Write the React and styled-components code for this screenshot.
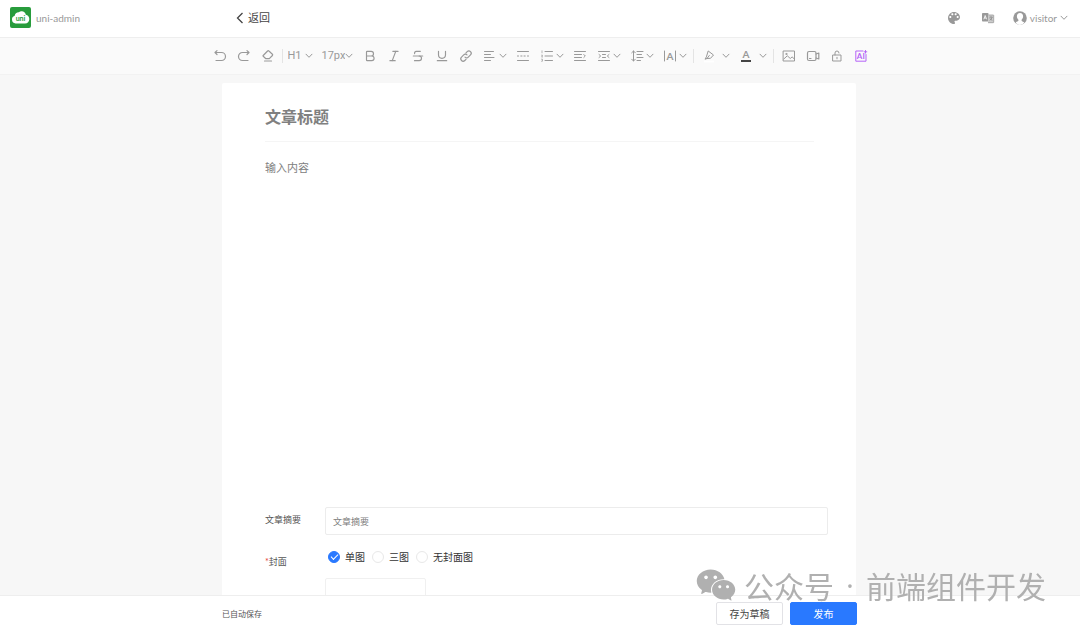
import React, { useState } from 'react'
import styled, { createGlobalStyle } from 'styled-components'
import { Bold, Italic, Strikethrough, Underline } from 'lucide-react'
import { IoMdColorPalette } from 'react-icons/io'
import { AiFillWechat } from 'react-icons/ai'

const GlobalStyle = createGlobalStyle`
    * {
        box-sizing: border-box;
    }

    body {
        margin: 0;
        background: #f7f7f7;
        color: #555;
        font-family: Lato, 'Noto Sans CJK SC', sans-serif;
        font-size: 10px;
    }

    button,
    input,
    select,
    textarea {
        margin: 0;
        padding: 0;
        border: 0;
        outline: 0;
        background: none;
        color: inherit;
        font: inherit;
    }

    svg {
        display: block;
        flex: none;
        overflow: visible;
    }
`

const Page = styled.div`
    display: flex;
    flex-direction: column;
    height: 100vh;
`

const Header = styled.header`
    display: flex;
    align-items: center;
    height: 38px;
    padding: 0 12px 2px 10px;
    border-bottom: 1px solid #eee;
    background: #fff;
`

const Brand = styled.a`
    display: flex;
    align-items: center;
    gap: 5px;
    width: 226px;
    color: #999;
    text-decoration: none;
`

const BackButton = styled.button`
    display: flex;
    align-items: center;
    gap: 4px;
    color: #444;
    font-size: 11px;
    line-height: 16px;
`

const HeaderTools = styled.div`
    display: flex;
    align-items: center;
    margin-left: auto;
    color: #999;
`

const HeaderButton = styled.button`
    display: flex;
    align-items: center;
    justify-content: center;
    width: 34px;
    height: 24px;
`

const UserButton = styled.button`
    display: flex;
    align-items: center;
    gap: 3px;
    margin-left: 8px;
`

const Toolbar = styled.div`
    display: flex;
    align-items: center;
    justify-content: center;
    height: 37px;
    border-bottom: 1px solid #f2f2f2;
    background: #fafafa;
    color: #999;
`

const ToolButton = styled.button`
    display: flex;
    align-items: center;
    justify-content: ${props => (props.$menu ? 'space-between' : 'center')};
    flex: none;
    width: ${props => (props.$wide ? 37 : props.$menu ? 33 : 24)}px;
    height: 24px;
    padding: ${props => (props.$menu ? '0 4px 0 6px' : 0)};
`

const Separator = styled.span`
    width: 1px;
    height: 14px;
    margin: 0 ${props => props.$gap}px 0 2px;
    background: #e4e4e4;
`

const SelectBox = styled.label`
    display: flex;
    align-items: center;
    flex: none;
    width: ${props => props.$width}px;
    height: 24px;
    padding: 0 5px 0 4px;
`

const Select = styled.select`
    flex: 1;
    min-width: 0;
    appearance: none;
    font-family: Roboto, sans-serif;
    font-size: 11px;
    line-height: 16px;
`

const Main = styled.main`
    flex: 1;
    min-height: 0;
    padding: 8px 224px 0 222px;
    overflow: hidden;
`

const Paper = styled.form`
    display: flex;
    flex-direction: column;
    padding: 20px 28px 40px 43px;
    border-radius: 2px;
    background: #fff;
`

const TitleInput = styled.input`
    height: 39px;
    margin-right: 14px;
    padding-bottom: 12px;
    border-bottom: 1px solid #f5f5f5;
    font-size: 16px;
    font-weight: 700;

    &::placeholder {
        color: #808080;
        opacity: 1;
    }
`

const Content = styled.textarea`
    height: 345px;
    margin-top: 16px;
    font-size: 11px;
    line-height: 20px;
    resize: none;

    &::placeholder {
        color: #808080;
        opacity: 1;
    }
`

const Field = styled.div`
    display: flex;
    margin-top: ${props => props.$top}px;
`

const FieldLabel = styled.label`
    width: 60px;
    padding-top: 5px;
    font-size: 9px;
    line-height: 16px;
`

const Required = styled.span`
    color: #e43d33;
`

const SummaryInput = styled.input`
    flex: 1;
    height: 28px;
    padding: 0 7px;
    border: 1px solid #ececec;
    border-radius: 2px;
    font-size: 9px;

    &::placeholder {
        color: #808080;
        opacity: 1;
    }
`

const CoverBox = styled.div`
    display: flex;
    flex-direction: column;
    gap: 13px;
`

const RadioGroup = styled.div`
    display: flex;
    gap: 7px;
    padding-left: 3px;
    color: #333;
`

const RadioLabel = styled.label`
    display: flex;
    align-items: center;
    gap: 5px;
    line-height: 16px;
`

const Radio = styled.input`
    display: grid;
    place-items: center;
    width: 12px;
    height: 12px;
    border: 1px solid #e8e8e8;
    border-radius: 50%;
    appearance: none;

    &:checked {
        border-color: #2979ff;
        background: #2979ff;
    }

    &:checked::after {
        content: '';
        width: 6px;
        height: 3px;
        margin-bottom: 2px;
        border: solid #fff;
        border-width: 0 0 1px 1px;
        transform: rotate(-45deg);
    }
`

const Upload = styled.button`
    width: 101px;
    height: 100px;
    border: 1px solid #f0f0f0;
    border-radius: 2px;
`

const Footer = styled.footer`
    display: flex;
    align-items: center;
    gap: 7px;
    height: 36px;
    padding: 0 223px 0 222px;
    border-top: 1px solid #eee;
    background: #fff;
`

const SaveState = styled.span`
    margin-right: auto;
    font-size: 8px;
`

const FooterButton = styled.button`
    width: 67px;
    height: 23px;
    border: 1px solid ${props => (props.$primary ? '#2979ff' : '#e2e2e6')};
    border-radius: 2px;
    background: ${props => (props.$primary ? '#2979ff' : '#fff')};
    color: ${props => (props.$primary ? '#fff' : '#444')};
    line-height: 16px;
`

// floats over the page and the footer
const Watermark = styled.div`
    position: fixed;
    right: 34px;
    bottom: 24px;
    display: flex;
    align-items: center;
    color: #b0b0b0;
    font-family: 'Noto Sans CJK SC', sans-serif;
    font-size: 30px;
    line-height: 44px;
    pointer-events: none;
`

const WatermarkDot = styled.span`
    width: 32px;
    font-family: 'Open Sans', sans-serif;
    text-align: center;
`

const WatermarkLogo = styled(AiFillWechat)`
    margin-right: 6px;
`

const Icon = ({ children }) => (
    <svg
        width="12"
        height="12"
        viewBox="0 0 12 12"
        fill="none"
        stroke="currentColor"
        strokeLinecap="round"
        strokeLinejoin="round"
        aria-hidden="true"
    >
        {children}
    </svg>
)

const Chevron = () => (
    <svg width="8" height="6" viewBox="0 0 8 6" fill="none" stroke="currentColor" aria-hidden="true">
        <path d="M1 1.2 4 4.3 7 1.2" strokeLinecap="round" strokeLinejoin="round" />
    </svg>
)

const Logo = () => (
    <svg width="21" height="21" viewBox="0 0 21 21" aria-hidden="true">
        <rect width="21" height="21" rx="2" fill="#289c3c" />
        <path
            fill="#fff"
            d="M5.6 16.4a3.9 3.9 0 0 1-.9-7.6 4.2 4.2 0 0 1 4.1-3.6c.9-.8 2-1.1 3-1 2 .1 3.6 1.5 4 3.5 2.2.5 3.5 2.1 3.5 4.2 0 2.500-1.700 4.500-4.300 4.500z"
        />
        <text x="10.5" y="13.8" fill="#289c3c" fontSize="7" fontWeight="700" textAnchor="middle">
            uni
        </text>
    </svg>
)

const icons = {
    undo: (
        <Icon>
            <path d="M3 .6 1 2.5 3 4.5M1.200 2.500H7.500a4 4 0 0 1 0 8H2" strokeWidth="1.200" />
        </Icon>
    ),
    redo: (
        <Icon>
            <path d="M9 .6l2 1.900-2 2M10.800 2.500H4.500a4 4 0 0 0 0 8H10" strokeWidth="1.200" />
        </Icon>
    ),
    eraser: (
        <Icon>
            <path d="M1.200 5.500 5.600 1q.7-.6 1.300 0l3.500 3.200q.6.600 0 1.300L7.300 8.700H3.900L1.200 6.300q-.4-.4 0-.8zM2.500 11h7" strokeWidth="1.200" />
        </Icon>
    ),
    align: (
        <Icon>
            <path d="M.5 1.500h9M.5 4.500h6M.5 7.500h9.500M.5 10.500h6" />
        </Icon>
    ),
    divider: (
        <Icon>
            <path d="M.5 1.500h11M.5 6h1M3.800 6h1.200M7 6h1.200M10.500 6h1M.5 10.500h11" />
        </Icon>
    ),
    list: (
        <Icon>
            <path d="M4 1.500h7.500M4 6h7.500M4 10.500h7.500" />
            <path d="M1 .8v2M.5 5.200h1v.8l-1 1h1M.5 9.200h1v2h-1" strokeWidth=".7" />
        </Icon>
    ),
    indent: (
        <Icon>
            <path d="M.5 1.500h11M.5 4.500h7M.5 7.500h7M.5 10.500h11M9.800 4.500 11.300 6 9.800 7.500" />
        </Icon>
    ),
    margins: (
        <Icon>
            <path d="M.5 1.500h11M4.500 4.500h3M4.500 7.500h3M.5 10.500h11M1 4.500 2.700 6 1 7.500M11 4.500 9.300 6 11 7.500" />
        </Icon>
    ),
    lineHeight: (
        <Icon>
            <path d="M2.500 1v10M.7 2.800 2.500 1l1.800 1.800M.7 9.200 2.500 11l1.800-1.800M6 1.500h6M6 4.500h4.500M6 7.500h6M6 10.500h3.500" />
        </Icon>
    ),
    spacing: (
        <Icon>
            <path d="M.5 1v10M11.500 1v10" />
            <text x="6" y="9.5" fill="currentColor" stroke="none" fontSize="10" fontWeight="700" textAnchor="middle">
                A
            </text>
        </Icon>
    ),
    highlight: (
        <Icon>
            <path d="M5.500 1.200 10.500 5 7.500 8.300 4 8.500 2 9.200 3.200 7.200zM4 8.500 6.300 5.500" />
            <path d="M1 11.500h10" stroke="#fff" strokeWidth="2" strokeLinecap="butt" />
        </Icon>
    ),
    color: (
        <Icon>
            <text x="6" y="8" fill="currentColor" stroke="none" fontSize="10" fontWeight="700" textAnchor="middle">
                A
            </text>
            <path d="M1 11h10" stroke="#444" strokeWidth="2" strokeLinecap="butt" />
        </Icon>
    ),
    image: (
        <Icon>
            <path d="M.5 1h11v10H.5zM.8 9l3.500-3.200 3 2.700 1.800-1.600 2.200 2" />
            <circle cx="3.300" cy="4" r=".6" />
        </Icon>
    ),
    video: (
        <Icon>
            <rect x=".5" y="1.500" width="8.500" height="9" rx="1.500" strokeWidth="1.200" />
            <path d="M9 4 11.800 3v6L9 8M2.500 8.500H4" strokeWidth="1.200" />
        </Icon>
    ),
    lock: (
        <Icon>
            <path d="M2 5h8v6H2zM4 5V3a2 2 0 0 1 4 0M6 7.300v1.500" />
        </Icon>
    ),
    ai: (
        <Icon>
            <path d="M8 1H.8v10.200H11V4.500M10.500.500v2.600M9.200 1.800h2.600" stroke="#b565f7" />
            <text x="5.8" y="9" fill="#b565f7" stroke="none" fontSize="8" fontWeight="700" textAnchor="middle">
                AI
            </text>
        </Icon>
    ),
}

const lucideProps = { size: 14, strokeWidth: 2, 'aria-hidden': true }

const textTools = [
    { name: '加粗', icon: <Bold {...lucideProps} /> },
    { name: '斜体', icon: <Italic {...lucideProps} /> },
    { name: '删除线', icon: <Strikethrough {...lucideProps} /> },
    { name: '下划线', icon: <Underline {...lucideProps} /> },
    {
        name: '链接',
        icon: (
            <Icon>
                <path
                    d="M5 7.200a2.300 2.300 0 0 0 3.300 0l2.200-2.300a2.300 2.300 0 0 0-3.300-3.300L6 2.800M7 4.900a2.300 2.300 0 0 0-3.300 0L1.500 7.200a2.300 2.300 0 0 0 3.300 3.300L6 9.300"
                    strokeWidth="1.200"
                />
            </Icon>
        ),
    },
    { name: '对齐', icon: icons.align, menu: true },
    { name: '分割线', icon: icons.divider },
    { name: '列表', icon: icons.list, menu: true },
    { name: '首行缩进', icon: icons.indent },
    { name: '两端缩进', icon: icons.margins, menu: true },
    { name: '行高', icon: icons.lineHeight, menu: true },
    { name: '字间距', icon: icons.spacing, menu: true },
]

const colorTools = [
    { name: '背景色', icon: icons.highlight, menu: true, wide: true },
    { name: '文字颜色', icon: icons.color, menu: true, wide: true },
]

const insertTools = [
    { name: '图片', icon: icons.image },
    { name: '视频', icon: icons.video },
    { name: '付费', icon: icons.lock },
    { name: 'AI', icon: icons.ai },
]

const historyTools = [
    { name: '撤销', icon: icons.undo },
    { name: '重做', icon: icons.redo },
    { name: '清除格式', icon: icons.eraser },
]

const Tools = ({ items }) =>
    items.map(({ name, icon, menu, wide }) => (
        <ToolButton key={name} type="button" aria-label={name} $menu={menu} $wide={wide}>
            {icon}
            {menu && <Chevron />}
        </ToolButton>
    ))

const covers = ['单图', '三图', '无封面图']

const App = () => {
    const [title, setTitle] = useState('')
    const [content, setContent] = useState('')
    const [summary, setSummary] = useState('')
    const [cover, setCover] = useState('单图')

    return (
        <Page>
            <GlobalStyle />
            <Header>
                <Brand href="#">
                    <Logo />
                    uni-admin
                </Brand>
                <BackButton type="button">
                    <svg width="8" height="12" viewBox="0 0 8 12" fill="none" stroke="currentColor" aria-hidden="true">
                        <path d="M6.500 1 1.500 6l5 5" strokeWidth="1.300" />
                    </svg>
                    返回
                </BackButton>
                <HeaderTools>
                    <HeaderButton type="button" aria-label="主题">
                        <IoMdColorPalette size={16} />
                    </HeaderButton>
                    <HeaderButton type="button" aria-label="语言">
                        <svg width="12" height="12" viewBox="0 0 12 12" aria-hidden="true">
                            <rect y="1" width="6.5" height="8.5" rx=".8" fill="#999" />
                            <path d="M1.800 7.300 3.200 3.500l1.400 3.800M2.300 6h1.800" fill="none" stroke="#fff" strokeWidth=".8" />
                            <path d="M6.500 3h4.700q.5 0 .5.500v6.700q0 .5-.5.500H6" fill="#ccc" stroke="#999" strokeWidth=".8" />
                            <path d="M7.300 5.200h3.400M9 4.300v1M10.200 5.300q-.7 2-2.500 3M7.900 6.300q.8 1.500 2.500 2" fill="none" stroke="#777" strokeWidth=".6" />
                        </svg>
                    </HeaderButton>
                    <UserButton type="button">
                        <svg width="14" height="14" viewBox="0 0 14 14" aria-hidden="true">
                            <circle cx="7" cy="7" r="6.8" fill="#999" />
                            <path
                                d="M7 2C4.900 2 3.900 3.500 3.900 5.300c0 1.700.7 2.700 1.500 3.500.3 1-.2 1.400-2.700 2.400Q4 14 7 14t4.300-2.800c-2.500-1-3-1.400-2.700-2.400.8-.8 1.500-1.800 1.500-3.500C10.100 3.500 9.100 2 7 2z"
                                fill="#fff"
                            />
                        </svg>
                        visitor
                        <Chevron />
                    </UserButton>
                </HeaderTools>
            </Header>

            <Toolbar role="toolbar" aria-label="编辑工具">
                <Tools items={historyTools} />
                <Separator $gap={1} />
                <SelectBox $width={34}>
                    <Select aria-label="标题级别" defaultValue="H1">
                        <option>H1</option>
                        <option>H2</option>
                        <option>H3</option>
                    </Select>
                    <Chevron />
                </SelectBox>
                <SelectBox $width={40}>
                    <Select aria-label="字号" defaultValue="17px">
                        <option>15px</option>
                        <option>17px</option>
                        <option>20px</option>
                    </Select>
                    <Chevron />
                </SelectBox>
                <Tools items={textTools} />
                <Separator $gap={3} />
                <Tools items={colorTools} />
                <Separator $gap={3} />
                <Tools items={insertTools} />
            </Toolbar>

            <Main>
                <Paper onSubmit={event => event.preventDefault()}>
                    <TitleInput
                        aria-label="文章标题"
                        placeholder="文章标题"
                        value={title}
                        onChange={event => setTitle(event.target.value)}
                    />
                    <Content
                        aria-label="输入内容"
                        placeholder="输入内容"
                        value={content}
                        onChange={event => setContent(event.target.value)}
                    />
                    <Field $top={4}>
                        <FieldLabel htmlFor="summary">文章摘要</FieldLabel>
                        <SummaryInput
                            id="summary"
                            placeholder="文章摘要"
                            value={summary}
                            onChange={event => setSummary(event.target.value)}
                        />
                    </Field>
                    <Field $top={14}>
                        <FieldLabel as="span" id="cover-label">
                            <Required>*</Required>封面
                        </FieldLabel>
                        <CoverBox>
                            <RadioGroup role="radiogroup" aria-labelledby="cover-label">
                                {covers.map(name => (
                                    <RadioLabel key={name}>
                                        <Radio
                                            type="radio"
                                            name="cover"
                                            checked={cover === name}
                                            onChange={() => setCover(name)}
                                        />
                                        {name}
                                    </RadioLabel>
                                ))}
                            </RadioGroup>
                            <Upload type="button" aria-label="上传封面" />
                        </CoverBox>
                    </Field>
                </Paper>
            </Main>

            <Footer>
                <SaveState>已自动保存</SaveState>
                <FooterButton type="button">存为草稿</FooterButton>
                <FooterButton type="button" $primary>发布</FooterButton>
            </Footer>

            <Watermark>
                <WatermarkLogo size={44} />
                公众号
                <WatermarkDot>·</WatermarkDot>
                前端组件开发
            </Watermark>
        </Page>
    )
}

export default App
